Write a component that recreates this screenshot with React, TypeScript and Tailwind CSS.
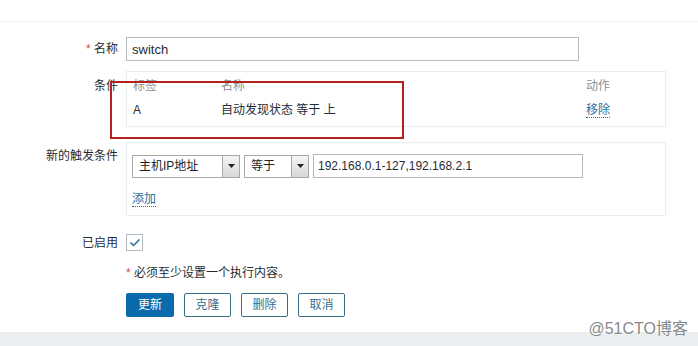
import { Check } from 'lucide-react';

function SelectBox({ label, width }: { label: string; width: string }) {
  return (
    <div className={`flex h-[23px] border border-[#a9a9a9] bg-white ${width}`}>
      <div className="flex-1 pl-[6px] text-[12px] leading-[21px] text-[#222]">{label}</div>
      <div className="flex w-[17px] items-center justify-center border-l border-[#a9a9a9] bg-gradient-to-b from-[#f4f4f4] to-[#d8d8d8]">
        <svg width="7" height="4" viewBox="0 0 7 4">
          <path d="M0 0h7L3.5 4z" fill="#222" />
        </svg>
      </div>
    </div>
  );
}

function Label({ children, pt = 'pt-[3px]' }: { children: React.ReactNode; pt?: string }) {
  return <div className={`text-right text-[12px] leading-[18px] text-[#1f2c33] ${pt}`}>{children}</div>;
}

export default function App() {
  const buttons = ['克隆', '删除', '取消'];

  return (
    <div
      className="relative h-[346px] w-[698px] overflow-hidden bg-white text-[12px] text-[#1f2c33]"
      style={{ fontFamily: '"Liberation Sans", "Noto Sans CJK SC", sans-serif' }}
    >
      <div className="h-[22px] border-b border-[#eef0f1]" />

      <div className="grid grid-cols-[118px_1fr] gap-x-2 pt-[15px]">
        {/* 名称 */}
        <Label pt="pt-[3px]">
          <span className="text-[#d64e4e]">*</span> 名称
        </Label>
        <input
          readOnly
          value="switch"
          className="h-[24px] w-[453px] border border-[#b3bcc0] bg-white px-[5px] text-[13px] text-[#1f2c33] outline-none"
        />

        {/* 条件 */}
        <div className="mt-[10px]">
          <Label pt="pt-[6px]">条件</Label>
        </div>
        <div className="mt-[10px] h-[56px] w-[540px] border border-[#ebeef0] px-[6px] pt-[5px]">
          <div className="grid grid-cols-[88px_365px_1fr] leading-[18px] text-[#8a8f92]">
            <div>标签</div>
            <div>名称</div>
            <div>动作</div>
          </div>
          <div className="mt-[6px] grid grid-cols-[88px_365px_1fr] leading-[18px] text-[#1f2c33]">
            <div>A</div>
            <div>自动发现状态 等于 上</div>
            <div>
              <span className="border-b border-dotted border-[#1f6fa5] text-[#1f6fa5]">移除</span>
            </div>
          </div>
        </div>

        {/* 新的触发条件 */}
        <div className="mt-[15px]">
          <Label pt="pt-[5px]">新的触发条件</Label>
        </div>
        <div className="mt-[15px] h-[74px] w-[540px] border border-[#ebeef0] px-[5px] pt-[11px]">
          <div className="flex items-center gap-[4px]">
            <SelectBox label="主机IP地址" width="w-[108px]" />
            <SelectBox label="等于" width="w-[65px]" />
            <input
              readOnly
              value="192.168.0.1-127,192.168.2.1"
              className="h-[24px] w-[270px] border border-[#b3bcc0] bg-white px-[4px] text-[12px] text-[#1f2c33] outline-none"
            />
          </div>
          <div className="mt-[12px] leading-[18px]">
            <span className="border-b border-dotted border-[#1f6fa5] text-[#1f6fa5]">添加</span>
          </div>
        </div>

        {/* 已启用 */}
        <div className="mt-[18px]">
          <Label pt="pt-0">已启用</Label>
        </div>
        <div className="mt-[18px]">
          <div className="flex h-[17px] w-[17px] items-center justify-center border border-[#b3bcc0] bg-white">
            <Check size={12} strokeWidth={3.5} className="text-[#2f7a9c]" />
          </div>
        </div>

        <div />
        <div className="mt-[12px] leading-[18px]">
          <span className="text-[#d64e4e]">*</span> 必须至少设置一个执行内容。
        </div>

        <div />
        <div className="mt-[11px] flex gap-[10px]">
          <button className="h-[24px] w-[48px] rounded-[2px] bg-[#0b6aab] text-[12px] text-white">更新</button>
          {buttons.map((b) => (
            <button
              key={b}
              className="h-[24px] w-[47px] rounded-[2px] border border-[#3a6f8c] bg-white text-[12px] text-[#3a6f8c]"
            >
              {b}
            </button>
          ))}
        </div>
      </div>

      <div className="absolute bottom-0 left-0 h-[14px] w-full bg-[#ebeef0]" />

      {/* annotation box */}
      <div className="absolute left-[110px] top-[81px] h-[58px] w-[294px] border-2 border-[#b32121]" />

      <div
        className="absolute right-[10px] top-[319px] text-[16px] leading-[20px] text-[#8a8a8a]"
        style={{ textShadow: '0 0 2px #fff' }}
      >
        @51CTO博客
      </div>
    </div>
  );
}
